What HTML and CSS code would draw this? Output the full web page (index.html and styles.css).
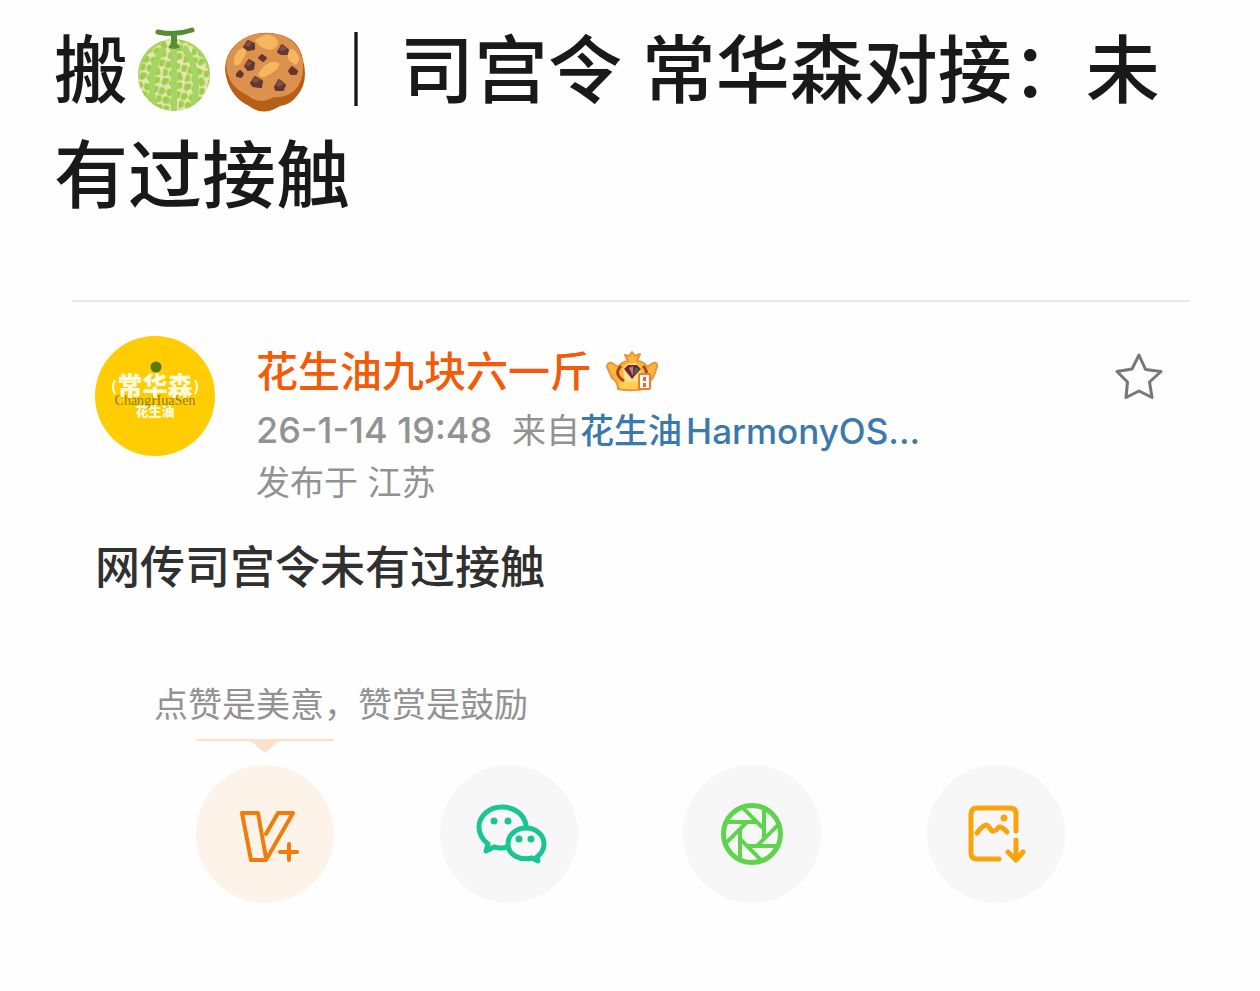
FILE: index.html
```html
<!DOCTYPE html>
<html lang="zh-CN">
<head>
<meta charset="utf-8">
<meta name="viewport" content="width=device-width, initial-scale=1">
<title>司宫令 常华森对接</title>
<link rel="stylesheet" href="styles.css">
</head>
<body>
<main class="page">
  <h1 class="title">搬<svg class="emoji" viewBox="0 0 92 92" role="img" aria-label="甜瓜">
      <defs>
        <pattern id="net" width="23" height="27" patternUnits="userSpaceOnUse" patternTransform="rotate(14)">
          <path d="M1 2l4-1 2 3-2 4-4 0zM9 1l6 1 0 4-4 2-3-3zM17 2l5-1 0 6-4 1zM8 9l5 1 0 5-5 1-2-4zM0 10l4 0 1 5-4 2zM15 9l3 1 3 5-4 3-3-4zM2 19l5-1 1 4-4 4-3-2zM10 18l4 0 1 4-4 3-2-2zM17 20l4-1 1 5-4 2z" fill="#9fce4e" stroke="#9fce4e" stroke-width=".8" stroke-linejoin="round"/>
        </pattern>
        <clipPath id="rind"><circle cx="46" cy="53" r="36"/></clipPath>
      </defs>
      <circle cx="46" cy="53" r="36" fill="#e6e7ae"/>
      <circle cx="46" cy="53" r="36" fill="url(#net)"/>
      <g clip-path="url(#rind)" fill="none" stroke="#a5d565" stroke-width="6">
        <path d="M34 17Q-1 38 11 78" stroke-width="5"/><path d="M36 26Q17 50 28 91"/><path d="M46 22V92"/><path d="M56 26Q75 50 64 91"/><path d="M58 17Q93 38 81 78" stroke-width="5"/>
      </g>
      <path d="M30 10Q47 14 64 8" fill="none" stroke="#568c32" stroke-width="5" stroke-linecap="round"/>
      <path d="M43 12h6v10l3 3q-6 4-12 0l3-3z" fill="#568c32"/>
    </svg><svg class="emoji" viewBox="0 0 92 92" role="img" aria-label="曲奇">
      <path d="M5 48Q5 28 23 17Q38 8 57 12Q79 16 83 38Q89 60 77 74Q70 83 60 84Q43 95 29 84Q8 74 5 48z" fill="#b65f15"/>
      <path d="M6 42Q8 26 25 16Q43 8 60 13Q80 19 83 41Q84 60 74 69Q66 76 54 75Q39 84 27 73Q7 64 6 42z" fill="#dd914f"/>
      <path d="M35 18Q50 7 58 19Q58 27 50 28Q39 26 35 18zM14 43Q13 29 23 26Q29 28 23 37Q20 45 14 43zM38 52Q48 36 59 41Q61 47 45 55Q39 56 38 52zM68 36Q67 24 74 28Q83 37 76 43Q70 40 68 36z" fill="#f5b75d"/>
      <g fill="#633630" stroke="#633630" stroke-width="2" stroke-linejoin="round">
        <path d="M24 25l4-6 6 3 0 5-6 1zM58 30l4-7 6 5-1 4-6 0zM25 44l4-6 5 3-1 6-5 1zM39 36l3-3 4 3-3 3zM69 49l3-4 5 4-1 3-5 0zM17 52l3-3 3 3-2 3-4-1zM31 61l4-6 7 4-1 6-8-1zM55 65l4-7 6 5-2 5-7 0z"/>
      </g>
      <g fill="#81504a">
        <path d="M25 24l3-5 4 2-3 4zM59 28l3-5 5 4-5 2zM25 43l4-4 3 2-3 3zM32 59l3-4 5 3-4 3zM56 63l3-5 5 4-5 3z"/>
      </g>
    </svg><span class="bar">｜</span>司宫令 常华森对接：未有过接触</h1>

  <article class="post">
    <header class="author">
      <svg class="avatar" viewBox="0 0 120 120" role="img" aria-label="常华森花生油">
        <circle cx="60" cy="60" r="60" fill="#ffcd02"/>
        <circle cx="61" cy="31" r="5.500" fill="#557a08"/>
        <text class="logo-latin" x="60" y="69" text-anchor="middle">ChangHuaSen</text>
        <text class="logo-name" x="60" y="59" text-anchor="middle">常华森</text>
        <path d="M20 44q-4 7 0 14M100 44q4 7 0 14" fill="none" stroke="#fffbe0" stroke-width="2"/>
        <text class="logo-sub" x="60" y="80" text-anchor="middle">花生油</text>
      </svg>
      <div class="info">
        <div class="name-row">
          <a class="name" href="#">花生油九块六一斤</a>
          <svg class="crown" viewBox="0 0 52 42" role="img" aria-label="会员">
            <path d="M12 38Q12 31 6 27L1 16q0-5 5-4l6 4Q17 10 22 10L19 4l4 1 3-4 3 4 5-2-3 7q7 0 10 6l6-4q5-1 4 4l-4 11q-5 4-5 10-15 4-30 1z" fill="#fbb63c" stroke="#e9963a" stroke-width="2" stroke-linejoin="round"/>
            <path d="M17 18q4-7 9-5 5-2 9 5l-2 13H19z" fill="#ffe394"/>
            <path d="M15 15q-8 8 3 15M37 15q8 8-3 15" fill="none" stroke="#a4471d" stroke-width="3"/>
            <path d="M18 18l4-4h9l4 4-9 10z" fill="#712632"/>
            <path d="M23 17l4-2 0 10z" fill="#c97975"/><path d="M29 17l4 1-5 7z" fill="#397060"/>
            <path d="M13 32q7-3 19-1v7q-10 1-18-1z" fill="#ffd052"/>
            <rect x="33" y="23" width="11" height="15" rx="1" fill="#fff" stroke="#ed7b31" stroke-width="2"/>
            <path d="M37 26h3v4h-3zM37 32h3v4h-3z" fill="#ef642d"/>
          </svg>
        </div>
        <p class="meta"><time>26-1-14 19:48</time><span class="from">来自<a class="source" href="#">花生油 <span class="device">HarmonyOS...</span></a></span></p>
        <p class="meta">发布于 江苏</p>
      </div>
      <button class="favorite" type="button" aria-label="收藏">
        <svg viewBox="0 0 48 48"><path d="M24 3l6.500 14.500 15.500 2-11.500 10.500 2.500 15.500-13-6.500-13 6.500 1.500-15.500-10.500-10.500 15-2.500z" fill="none" stroke="#777" stroke-width="3" stroke-linejoin="round"/></svg>
      </button>
    </header>
    <p class="content">网传司宫令未有过接触</p>
    <p class="hint">点赞是美意，赞赏是鼓励</p>
    <div class="actions">
      <button class="action reward" type="button" aria-label="赞赏">
        <svg class="pointer" viewBox="0 0 138 14"><path d="M0 0h138v2h-53q-5 0-9 6l-7 6-8-6q-4-6-9-6H0z" fill="#fde0ca"/></svg>
        <svg class="icon" viewBox="0 0 138 138" fill="none" stroke="#f07c0b" stroke-width="4" stroke-linecap="round" stroke-linejoin="round"><path d="M70 69L82 48H97L70 95H55L46 48H62L70 93M93 79V95M84 87H101"/></svg>
      </button>
      <button class="action" type="button" aria-label="微信">
        <svg class="icon" viewBox="0 0 138 138" fill="none" stroke="#19c595" stroke-width="5" stroke-linecap="round" stroke-linejoin="round">
          <path d="M86 60C84 49 74 42 62 42C49 42 39 51 39 62C39 70 43 75 48 79L46 86L54 82Q61 84 68 82"/>
          <path d="M97 92C102 88 104 84 104 79C104 70 96 63 86 63C76 63 68 70 68 79C68 90 80 96 92 93L98 96z"/>
          <g fill="#19c595" stroke="none"><circle cx="54" cy="56" r="3.500"/><circle cx="68" cy="56" r="3.500"/><circle cx="79" cy="74" r="3.500"/><circle cx="91" cy="74" r="3.500"/></g>
        </svg>
      </button>
      <button class="action" type="button" aria-label="朋友圈">
        <svg class="icon" viewBox="-69 -69 138 138" fill="none" stroke="#5fd34c" stroke-width="4">
          <circle r="28.500" stroke-width="5"/>
          <path id="blade" d="M-26 -12H5"/>
          <use href="#blade" transform="rotate(45)"/><use href="#blade" transform="rotate(90)"/><use href="#blade" transform="rotate(135)"/><use href="#blade" transform="rotate(180)"/><use href="#blade" transform="rotate(225)"/><use href="#blade" transform="rotate(270)"/><use href="#blade" transform="rotate(315)"/>
        </svg>
      </button>
      <button class="action" type="button" aria-label="保存图片">
        <svg class="icon" viewBox="0 0 138 138" fill="none" stroke="#fba30d" stroke-width="5" stroke-linecap="round" stroke-linejoin="round">
          <path d="M72 94H50Q44 94 44 88V49Q44 43 50 43H83Q89 43 89 49V66"/>
          <path d="M50 68Q57 58 61 61L65 66Q68 67 72 62Q76 62 80 67"/>
          <path d="M89 75V94M81 87L89 95L96 87"/>
          <circle cx="77" cy="53" r="3.500" fill="#fba30d" stroke="none"/>
        </svg>
      </button>
    </div>
  </article>
</main>
</body>
</html>
```

FILE: styles.css
```css
* { box-sizing: border-box; }

body {
  margin: 0;
  background: #fefefe;
  color: #191919;
  font-family: Inter, "Noto Sans CJK SC", sans-serif;
}

h1, p { margin: 0; }
a { color: inherit; text-decoration: none; }
button { border: 0; padding: 0; background: none; cursor: pointer; }
svg { display: block; }

.page { padding: 18px 54px 84px; }

.title {
  font-family: Inter, "Noto Sans CJK SC", sans-serif;
  font-size: 74px;
  font-weight: 500;
  line-height: 105px;
}

.emoji {
  display: inline-block;
  width: 92px;
  height: 92px;
  vertical-align: -17px;
}

.bar { margin: 0 7px; font-weight: 700; }

.post {
  margin: 72px 16px 0 18px;
  padding: 34px 23px 0;
  border-top: 2px solid #e9e9e9;
}

.author { display: flex; align-items: flex-start; }

.avatar { flex: none; width: 120px; height: 120px; }
.logo-name { font: 900 25px "Noto Sans CJK SC", sans-serif; fill: #fffbe0; }
.logo-latin { font: 14px "Liberation Serif", serif; fill: #917d08; }
.logo-sub { font: 900 13px "Noto Sans CJK SC", sans-serif; fill: #fffbe0; }

.info { flex: 1; margin-left: 41px; padding-top: 8px; }
.name-row { display: flex; align-items: center; gap: 14px; margin-bottom: 4px; }
.name { color: #f35b08; font-size: 42px; font-weight: 500; line-height: 56px; }
.crown { width: 52px; height: 42px; }
.meta { color: #929292; font-size: 34px; line-height: 52px; }
.meta time { font-size: 36px; font-weight: 500; }
.from { margin-left: 20px; }
.source { display: inline-flex; gap: 4px; color: #3b79ad; font-weight: 500; }
.device { font-size: 35px; }

.favorite { margin: 16px 4px 0 0; }
.favorite svg { width: 48px; height: 48px; }

.content {
  margin-top: 26px;
  color: #303030;
  font-size: 45px;
  font-weight: 500;
  line-height: 66px;
}

.hint {
  margin: 80px 0 0 59px;
  color: #929292;
  font-size: 34px;
  line-height: 48px;
}

.actions {
  display: grid;
  grid-template-columns: repeat(4, 1fr);
  justify-items: center;
  margin: 36px 49px 0 48px;
}

.action {
  position: relative;
  width: 138px;
  height: 138px;
  border-radius: 50%;
  background: #f7f7f7;
}

.reward { background: #fef3e9; }
.icon { width: 100%; height: 100%; }

.pointer {
  position: absolute;
  top: -26px;
  left: 0;
  width: 100%;
  height: 14px;
}
```
